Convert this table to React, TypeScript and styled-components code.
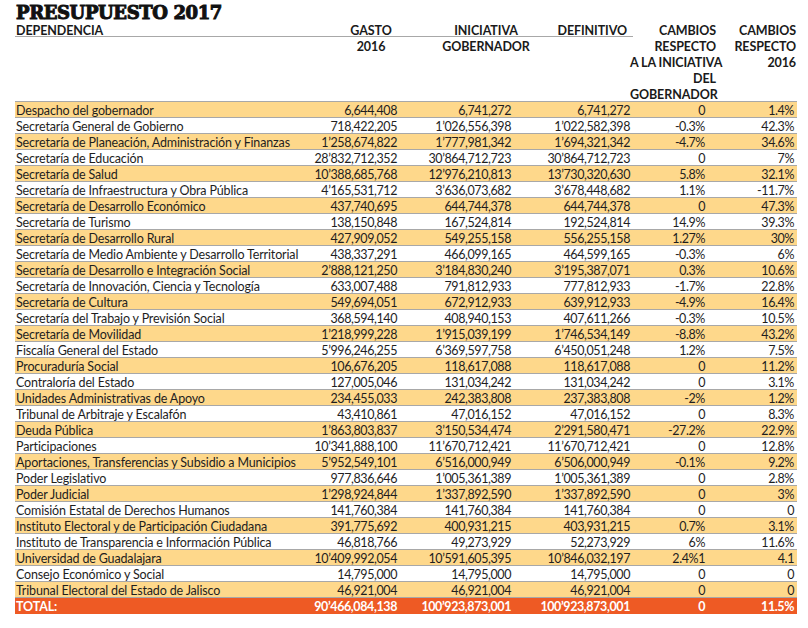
import React from "react";
import styled, { createGlobalStyle } from "styled-components";

const Global = createGlobalStyle`
  html, body { margin: 0; padding: 0; background: #ffffff; }
  body { font-family: Lato, "Open Sans", sans-serif; color: #1e1e1e; }
`;

const Page = styled.div`
  width: 808px;
  height: 628px;
  padding-left: 15px;
  box-sizing: border-box;
  overflow: hidden;
`;

const Title = styled.h1`
  margin: 0;
  height: 22px;
  box-sizing: border-box;
  padding: 4px 0 0 1px;
  font-family: "DejaVu Serif", "Liberation Serif", serif;
  font-weight: 900;
  font-size: 18px;
  line-height: 18px;
  letter-spacing: -0.4px;
  -webkit-text-stroke: 1px #111;
  color: #111;
  white-space: nowrap;
  overflow: hidden;
`;

const Header = styled.div`
  display: grid;
  grid-template-columns: 327px 58px 30px 112px 88px 89px 78px;
  width: 782px;
  height: 80px;
  border-bottom: 1px solid #a8a8a8;
  box-sizing: border-box;
  background: linear-gradient(#a8a8a8, #a8a8a8) no-repeat 0 14px / 618px 1px;
`;

const HeadCell = styled.div<{ $align: "left" | "center" | "right"; $pad?: number }>`
  font-weight: 700;
  font-size: 12.5px;
  line-height: 16px;
  padding-top: 1px;
  letter-spacing: -0.1px;
  text-transform: uppercase;
  white-space: nowrap;
  text-align: ${(p) => p.$align};
  padding-left: ${(p) => (p.$align === "left" ? p.$pad ?? 0 : 0)}px;
  padding-right: ${(p) => (p.$align === "right" ? p.$pad ?? 0 : 0)}px;
  color: #1a1a1a;
`;

const Row = styled.div<{ $tone: "gold" | "plain" | "total" }>`
  display: grid;
  grid-template-columns: 290px 95px 114px 119px 75px 89px;
  width: 782px;
  height: 16px;
  box-sizing: border-box;
  border-bottom: 1px solid ${(p) => (p.$tone === "total" ? "#ee5a24" : "#a8a8a8")};
  background: ${(p) =>
    p.$tone === "gold" ? "#fed88b" : p.$tone === "total" ? "#ee5a24" : "#ffffff"};
  color: ${(p) => (p.$tone === "total" ? "#ffffff" : "#1e1e1e")};
  font-weight: ${(p) => (p.$tone === "total" ? 700 : 400)};
`;

const Cell = styled.div<{ $num?: boolean }>`
  font-size: 12.5px;
  line-height: 15px;
  padding-top: 1px;
  letter-spacing: ${(p) => (p.$num ? -0.4 : -0.15)}px;
  white-space: nowrap;
  text-align: ${(p) => (p.$num ? "right" : "left")};
  padding-left: ${(p) => (p.$num ? 0 : 1)}px;
  padding-right: ${(p) => (p.$num ? 3 : 0)}px;
`;

type R = [string, string, string, string, string, string];

const rows: R[] = [
  ["Despacho del gobernador", "6,644,408", "6,741,272", "6,741,272", "0", "1.4%"],
  ["Secretaría General de Gobierno", "718,422,205", "1’026,556,398", "1’022,582,398", "-0.3%", "42.3%"],
  ["Secretaría de Planeación, Administración y Finanzas", "1’258,674,822", "1’777,981,342", "1’694,321,342", "-4.7%", "34.6%"],
  ["Secretaría de Educación", "28’832,712,352", "30’864,712,723", "30’864,712,723", "0", "7%"],
  ["Secretaría de Salud", "10’388,685,768", "12’976,210,813", "13’730,320,630", "5.8%", "32.1%"],
  ["Secretaría de Infraestructura y Obra Pública", "4’165,531,712", "3’636,073,682", "3’678,448,682", "1.1%", "-11.7%"],
  ["Secretaría de Desarrollo Económico", "437,740,695", "644,744,378", "644,744,378", "0", "47.3%"],
  ["Secretaría de Turismo", "138,150,848", "167,524,814", "192,524,814", "14.9%", "39.3%"],
  ["Secretaría de Desarrollo Rural", "427,909,052", "549,255,158", "556,255,158", "1.27%", "30%"],
  ["Secretaría de Medio Ambiente y Desarrollo Territorial", "438,337,291", "466,099,165", "464,599,165", "-0.3%", "6%"],
  ["Secretaría de Desarrollo e Integración Social", "2’888,121,250", "3’184,830,240", "3’195,387,071", "0.3%", "10.6%"],
  ["Secretaría de Innovación, Ciencia y Tecnología", "633,007,488", "791,812,933", "777,812,933", "-1.7%", "22.8%"],
  ["Secretaría de Cultura", "549,694,051", "672,912,933", "639,912,933", "-4.9%", "16.4%"],
  ["Secretaría del Trabajo y Previsión Social", "368,594,140", "408,940,153", "407,611,266", "-0.3%", "10.5%"],
  ["Secretaría de Movilidad", "1’218,999,228", "1’915,039,199", "1’746,534,149", "-8.8%", "43.2%"],
  ["Fiscalía General del Estado", "5’996,246,255", "6’369,597,758", "6’450,051,248", "1.2%", "7.5%"],
  ["Procuraduría Social", "106,676,205", "118,617,088", "118,617,088", "0", "11.2%"],
  ["Contraloría del Estado", "127,005,046", "131,034,242", "131,034,242", "0", "3.1%"],
  ["Unidades Administrativas de Apoyo", "234,455,033", "242,383,808", "237,383,808", "-2%", "1.2%"],
  ["Tribunal de Arbitraje y Escalafón", "43,410,861", "47,016,152", "47,016,152", "0", "8.3%"],
  ["Deuda Pública", "1’863,803,837", "3’150,534,474", "2’291,580,471", "-27.2%", "22.9%"],
  ["Participaciones", "10’341,888,100", "11’670,712,421", "11’670,712,421", "0", "12.8%"],
  ["Aportaciones, Transferencias y Subsidio a Municipios", "5’952,549,101", "6’516,000,949", "6’506,000,949", "-0.1%", "9.2%"],
  ["Poder Legislativo", "977,836,646", "1’005,361,389", "1’005,361,389", "0", "2.8%"],
  ["Poder Judicial", "1’298,924,844", "1’337,892,590", "1’337,892,590", "0", "3%"],
  ["Comisión Estatal de Derechos Humanos", "141,760,384", "141,760,384", "141,760,384", "0", "0"],
  ["Instituto Electoral y de Participación Ciudadana", "391,775,692", "400,931,215", "403,931,215", "0.7%", "3.1%"],
  ["Instituto de Transparencia e Información Pública", "46,818,766", "49,273,929", "52,273,929", "6%", "11.6%"],
  ["Universidad de Guadalajara", "10’409,992,054", "10’591,605,395", "10’846,032,197", "2.4%1", "4.1"],
  ["Consejo Económico y Social", "14,795,000", "14,795,000", "14,795,000", "0", "0"],
  ["Tribunal Electoral del Estado de Jalisco", "46,921,004", "46,921,004", "46,921,004", "0", "0"],
];

const total: R = ["TOTAL:", "90’466,084,138", "100’923,873,001", "100’923,873,001", "0", "11.5%"];

const DataRow = ({ r, tone }: { r: R; tone: "gold" | "plain" | "total" }) => (
  <Row $tone={tone}>
    <Cell>{r[0]}</Cell>
    {r.slice(1).map((v, i) => (
      <Cell key={i} $num>
        {v}
      </Cell>
    ))}
  </Row>
);

export default function App() {
  return (
    <Page>
      <Global />
      <Title>PRESUPUESTO 2017</Title>
      <Header>
        <HeadCell $align="left" $pad={1}>Dependencia</HeadCell>
        <HeadCell $align="center">
          Gasto
          <br />
          2016
        </HeadCell>
        <HeadCell $align="center" />
        <HeadCell $align="center">
          Iniciativa
          <br />
          Gobernador
        </HeadCell>
        <HeadCell $align="right" $pad={3}>Definitivo</HeadCell>
        <HeadCell $align="right" $pad={3}>
          Cambios
          <br />
          respecto
          <br />a la iniciativa
          <br />
          del
          <br />
          gobernador
        </HeadCell>
        <HeadCell $align="right" $pad={1}>
          Cambios
          <br />
          respecto
          <br />
          2016
        </HeadCell>
      </Header>
      {rows.map((r, i) => (
        <DataRow key={i} r={r} tone={i % 2 === 0 ? "gold" : "plain"} />
      ))}
      <DataRow r={total} tone="total" />
    </Page>
  );
}
